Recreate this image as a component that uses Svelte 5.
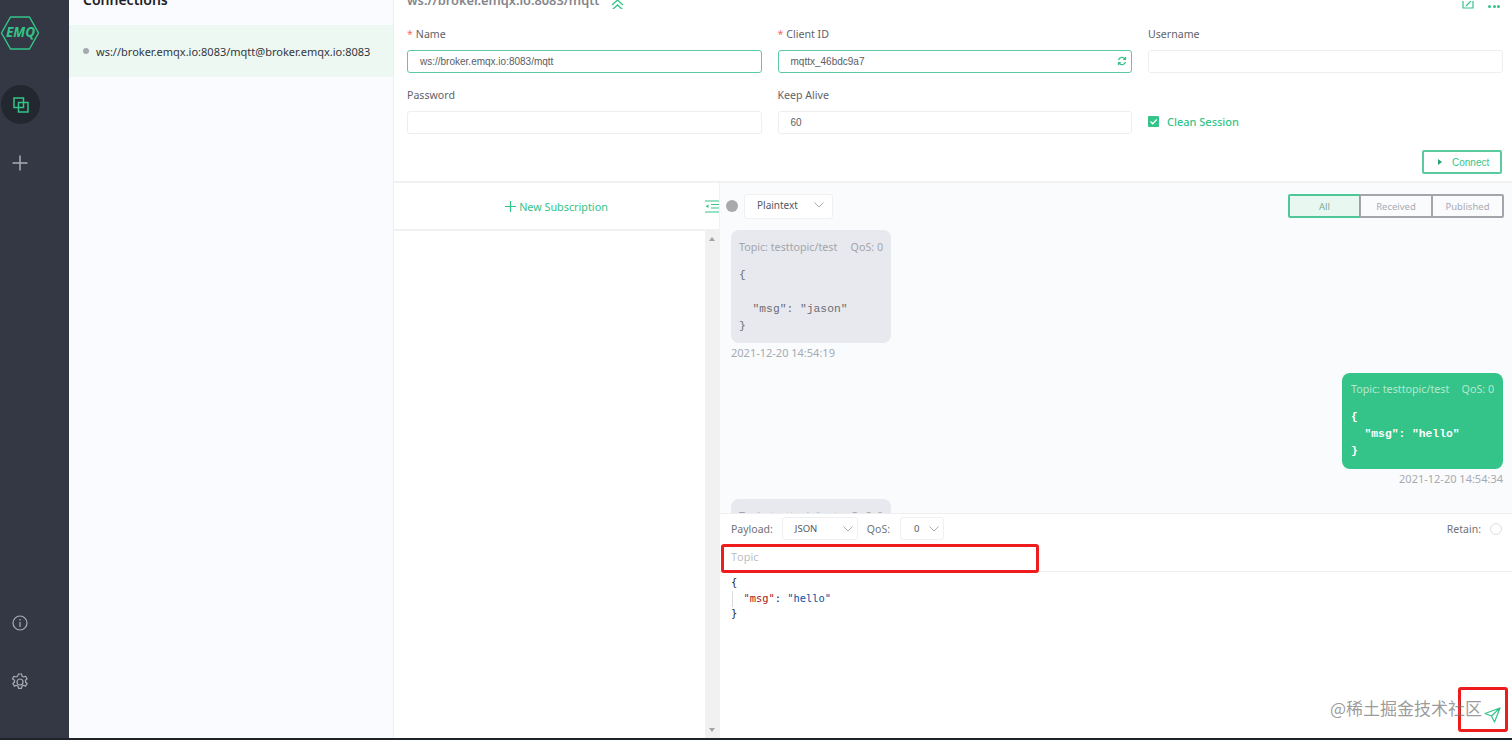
<script>
  const fields = [
    { label: 'Name', req: true, value: 'ws://broker.emqx.io:8083/mqtt', active: true },
    { label: 'Client ID', req: true, value: 'mqttx_46bdc9a7', active: true, refresh: true },
    { label: 'Username', value: '' },
    { label: 'Password', value: '' },
    { label: 'Keep Alive', value: '60' }
  ]
</script>

<div class="app">
  <aside class="sidebar">
    <div class="logo">
      <svg width="40" height="36" viewBox="0 0 40 36" fill="none">
        <path d="M10.5 2h19L38.5 18l-9 16h-19L1.500 18z" stroke="#34c388" stroke-width="1.500" stroke-linejoin="round" />
      </svg>
      <span>EMQ</span>
    </div>
    <div class="nav-active">
      <svg width="16" height="16" viewBox="0 0 16 16" fill="none" stroke="#34c388" stroke-width="1.500">
        <rect x="1" y="1" width="9.500" height="9.500" />
        <rect x="5.500" y="5.500" width="9.500" height="9.500" />
      </svg>
    </div>
    <div class="nav-plus">
      <svg width="16" height="16" viewBox="0 0 16 16" stroke="#a9acb4" stroke-width="1.500">
        <path d="M8 0.500v15M0.500 8h15" />
      </svg>
    </div>
    <div class="spacer"></div>
    <div class="nav-info">
      <svg width="16" height="16" viewBox="0 0 16 16" fill="none" stroke="#a9acb4" stroke-width="1.200">
        <circle cx="8" cy="8" r="7" />
        <path d="M8 7v5M8 4v1.500" />
      </svg>
    </div>
    <div class="nav-gear">
      <svg width="18" height="18" viewBox="0 0 18 18" fill="none" stroke="#a9acb4" stroke-width="1.200" stroke-linejoin="round">
        <path d="M7.500 1h3l.5 2.200 1.500.8 2.100-.8 1.500 2.600-1.600 1.500v1.700l1.600 1.500-1.500 2.600-2.100-.8-1.500.8-.5 2.200h-3l-.5-2.200-1.500-.8-2.100.8-1.500-2.600 1.600-1.500V7.300L1.400 5.800l1.500-2.600 2.100.8 1.500-.8z" />
        <circle cx="9" cy="9" r="3" />
      </svg>
    </div>
  </aside>

  <section class="connections">
    <h1>Connections</h1>
    <div class="conn-item">
      <i class="dot"></i>
      <span>ws://broker.emqx.io:8083/mqtt@broker.emqx.io:8083</span>
    </div>
  </section>

  <main class="main">
    <section class="config">
      <div class="titlebar">
        <h2>ws://broker.emqx.io:8083/mqtt</h2>
        <svg class="collapse" width="13" height="9" viewBox="0 0 13 9" fill="none" stroke="#34c388" stroke-width="1.300">
          <path d="M1 5l5.500-5 5.500 5M1 10l5.500-5 5.500 5" />
        </svg>
        <div class="spacer"></div>
        <svg width="12" height="8" viewBox="0 0 12 8" fill="none" stroke="#34c388" stroke-width="1.200">
          <path d="M1-4h10v11H1zM4 5l5-5" />
        </svg>
        <div class="more"><i></i><i></i><i></i></div>
      </div>
      <div class="form">
        {#each fields as f}
          <div class="field">
            <label>{#if f.req}<em>*</em>{/if}{f.label}</label>
            <div class="input" class:active={f.active}>
              {f.value}
              {#if f.refresh}
                <svg class="refresh" width="10" height="10" viewBox="0 0 10 10" fill="none" stroke="#34c388" stroke-width="1.300">
                  <path d="M1.500 4A3.600 3.600 0 0 1 8 3M8.500 6A3.600 3.600 0 0 1 2 7M8.500 1v2.300H6.200M1.500 9V6.700h2.300" />
                </svg>
              {/if}
            </div>
          </div>
        {/each}
        <div class="check-field">
          <span class="check">
            <svg width="11" height="11" viewBox="0 0 11 11" fill="none" stroke="#fff" stroke-width="1.300"><path d="M2.500 5.500l2.200 2.200 4-4.200" /></svg>
          </span>
          Clean Session
        </div>
      </div>
      <div class="connect-row">
        <button class="connect"><i class="play"></i>Connect</button>
      </div>
    </section>

    <div class="lower">
      <section class="subs">
        <div class="subs-head">
          <span class="new-sub">
            <svg width="11" height="11" viewBox="0 0 11 11" stroke="#34c388" stroke-width="1.200"><path d="M5.500 0v11M0 5.500h11" /></svg>
            New Subscription
          </span>
          <svg class="fold" width="14" height="13" viewBox="0 0 14 13" fill="none" stroke="#34c388" stroke-width="1.200">
            <path d="M0 1h14M6 4.500h8M6 8h8M0 12h14" />
            <path d="M3.500 4.500L.5 6.300l3 1.700z" fill="#34c388" stroke="none" />
          </svg>
        </div>
        <div class="subs-body">
          <div class="scrollbar">
            <i class="up"></i>
            <i class="down"></i>
          </div>
        </div>
      </section>

      <section class="chat">
        <div class="chat-head">
          <i class="status"></i>
          <div class="select plaintext">Plaintext
            <svg width="10" height="6" viewBox="0 0 10 6" fill="none" stroke="#a8abb2" stroke-width="1"><path d="M.5.500L5 5 9.500.500" /></svg>
          </div>
          <div class="spacer"></div>
          <div class="tabs">
            <span class="tab on">All</span>
            <span class="tab">Received</span>
            <span class="tab">Published</span>
          </div>
        </div>

        <div class="messages">
          <div class="msg left">
            <div class="bubble">
              <div class="meta"><span>Topic: testtopic/test</span><span>QoS: 0</span></div>
              <pre>{'{'}

  "msg": "jason"
{'}'}</pre>
            </div>
            <div class="time">2021-12-20 14:54:19</div>
          </div>
          <div class="msg right">
            <div class="bubble green">
              <div class="meta"><span>Topic: testtopic/test</span><span>QoS: 0</span></div>
              <pre>{'{'}
  "msg": "hello"
{'}'}</pre>
            </div>
            <div class="time">2021-12-20 14:54:34</div>
          </div>
          <div class="msg left">
            <div class="bubble">
              <div class="meta"><span>Topic: testtopic/test</span><span>QoS: 0</span></div>
            </div>
          </div>
        </div>

        <div class="publish">
          <div class="pub-opts">
            <span class="opt">Payload:</span>
            <div class="select json">JSON
              <svg width="10" height="6" viewBox="0 0 10 6" fill="none" stroke="#a8abb2" stroke-width="1"><path d="M.5.500L5 5 9.500.500" /></svg>
            </div>
            <span class="opt">QoS:</span>
            <div class="select qos">0
              <svg width="10" height="6" viewBox="0 0 10 6" fill="none" stroke="#a8abb2" stroke-width="1"><path d="M.5.500L5 5 9.500.500" /></svg>
            </div>
            <div class="spacer"></div>
            <span class="opt">Retain:</span>
            <i class="radio"></i>
          </div>
          <div class="topic">Topic</div>
          <div class="editor">
            <pre><span class="guide"></span>{'{'}
  <span class="key">"msg"</span>: <span class="str">"hello"</span>
{'}'}</pre>
          </div>
          <svg class="send" width="17" height="16" viewBox="0 0 17 16" fill="none" stroke="#34c388" stroke-width="1.200" stroke-linejoin="round">
            <path d="M16 1L1 6.500l6.500 2.500L10.500 15zM16 1L7.500 9" />
          </svg>
        </div>
      </section>
    </div>
  </main>

  <div class="mark mark-topic"></div>
  <div class="mark mark-send"></div>
  <div class="watermark">@稀土掘金技术社区</div>
</div>

<style>
  :global(body) {
    background: #1f2428;
    overflow: hidden;
  }

  .app {
    position: relative;
    display: flex;
    width: 1512px;
    height: 738px;
    overflow: hidden;
    background: #fff;
    font-family: "Noto Sans", "Open Sans", sans-serif;
    color: #44474f;
  }

  .spacer {
    flex: 1;
  }

  pre {
    margin: 0;
  }

  /* left rail */
  .sidebar {
    flex: 0 0 69px;
    display: flex;
    flex-direction: column;
    align-items: center;
    box-sizing: border-box;
    padding-bottom: 47px;
    background: #333844;
  }

  .logo {
    position: relative;
    width: 40px;
    height: 36px;
    margin: 15px 0 0 -29px;
    color: #34c388;
  }

  .logo span {
    position: absolute;
    left: 6px;
    top: 8px;
    font: italic 700 13.500px/18px "Noto Sans", sans-serif;
  }

  .nav-active {
    display: flex;
    align-items: center;
    justify-content: center;
    width: 39px;
    height: 39px;
    margin: 34px 0 0 -28px;
    border-radius: 50%;
    background: #23272f;
  }

  .nav-plus {
    display: flex;
    height: 16px;
    margin: 31px 0 0 -29px;
  }

  .nav-info {
    display: flex;
    height: 16px;
    margin: 0 0 42px -29px;
  }

  .nav-gear {
    display: flex;
    height: 18px;
    margin-left: -29px;
  }

  /* connection list */
  .connections {
    flex: 0 0 325px;
    box-sizing: border-box;
    min-width: 0;
    border-right: 1px solid #eceff1;
    background: #fafbfe;
  }

  .connections h1 {
    height: 25px;
    margin: -13px 0 0;
    padding-left: 14px;
    font-size: 14px;
    line-height: 25px;
    font-weight: 600;
    color: #1e2127;
  }

  .conn-item {
    display: flex;
    align-items: center;
    gap: 7px;
    height: 52px;
    margin-top: 13px;
    padding-left: 14px;
    background: #edf8f2;
    font-size: 11px;
    color: #33363d;
    white-space: nowrap;
  }

  .dot {
    width: 6px;
    height: 6px;
    border-radius: 50%;
    background: #a6a9b0;
  }

  .main {
    flex: 1;
    min-width: 0;
    display: flex;
    flex-direction: column;
  }

  /* connection form */
  .config {
    flex: 0 0 183px;
    box-sizing: border-box;
    padding: 0 10px 0 13px;
    border-bottom: 2px solid #eff1f3;
  }

  .titlebar {
    display: flex;
    align-items: flex-end;
    gap: 11px;
    height: 9px;
    padding-right: 2px;
  }

  .titlebar h2 {
    margin: 0;
    font-size: 12.800px;
    line-height: 18px;
    font-weight: 600;
    color: #83868d;
    white-space: nowrap;
  }

  .more {
    display: flex;
    gap: 1.500px;
    padding-left: 3px;
    margin-bottom: 1px;
  }

  .more i {
    width: 3px;
    height: 3px;
    background: #34c388;
    border-radius: 50%;
  }

  .form {
    display: grid;
    grid-template-columns: repeat(3, 354.500px);
    column-gap: 16px;
    row-gap: 13px;
    margin-top: 16px;
  }

  .field label {
    display: block;
    height: 17px;
    margin-bottom: 8px;
    font-size: 10.600px;
    line-height: 19px;
    color: #5f6269;
  }

  .field em {
    margin-right: 3px;
    font-style: normal;
    color: #f56c6c;
  }

  .input {
    position: relative;
    box-sizing: border-box;
    height: 23px;
    padding-left: 12px;
    border: 1px solid #eceef1;
    border-radius: 3px;
    font: 10px/21px "Liberation Sans", sans-serif;
    color: #5a5d64;
  }

  .input.active {
    border-color: #5cc9a0;
  }

  .refresh {
    position: absolute;
    right: 4px;
    top: 5px;
  }

  .check-field {
    display: flex;
    align-items: center;
    gap: 8px;
    margin-top: 24px;
    height: 23px;
    font-size: 11px;
    font-weight: 500;
    color: #34c388;
  }

  .check {
    display: flex;
    width: 11px;
    height: 11px;
    border-radius: 1px;
    background: #34c388;
  }

  .connect-row {
    display: flex;
    justify-content: flex-end;
    margin-top: 16px;
  }

  .connect {
    display: flex;
    align-items: center;
    gap: 10px;
    box-sizing: border-box;
    width: 80px;
    height: 24px;
    padding: 0 0 0 14px;
    border: 2px solid #5ccba0;
    border-radius: 2px;
    background: #fff;
    font: 10px "Liberation Sans", sans-serif;
    color: #34c388;
  }

  .play {
    width: 0;
    height: 0;
    border-left: 4px solid #2c9f70;
    border-top: 3px solid transparent;
    border-bottom: 3px solid transparent;
  }

  .lower {
    flex: 1;
    min-height: 0;
    display: flex;
  }

  /* subscriptions */
  .subs {
    flex: 0 0 325px;
    display: flex;
    flex-direction: column;
  }

  .subs-head {
    position: relative;
    display: flex;
    align-items: center;
    justify-content: center;
    flex: 0 0 48px;
    box-sizing: border-box;
    border-bottom: 2px solid #f0f1f3;
  }

  .new-sub {
    display: flex;
    align-items: center;
    gap: 3px;
    font-size: 10.800px;
    color: #34c388;
  }

  .fold {
    position: absolute;
    right: 0;
    top: 17px;
  }

  .subs-body {
    flex: 1;
    display: flex;
    justify-content: flex-end;
  }

  .scrollbar {
    position: relative;
    width: 14px;
    background: #f1f1f1;
  }

  .up, .down {
    position: absolute;
    left: 4px;
    width: 0;
    height: 0;
    border-left: 3px solid transparent;
    border-right: 3px solid transparent;
  }

  .up {
    top: 6px;
    border-bottom: 4px solid #a3a3a3;
  }

  .down {
    bottom: 6px;
    border-top: 4px solid #a3a3a3;
  }

  /* message pane */
  .chat {
    flex: 1;
    min-width: 0;
    display: flex;
    flex-direction: column;
    border-left: 1px solid #eff1f3;
    background: #fafbfd;
  }

  .chat-head {
    display: flex;
    align-items: center;
    flex: 0 0 46px;
    box-sizing: border-box;
    padding: 0 8px 0 6px;
  }

  .status {
    width: 12px;
    height: 12px;
    margin-right: 6px;
    border-radius: 50%;
    background: #a9a9ab;
  }

  .select {
    display: flex;
    align-items: center;
    justify-content: space-between;
    box-sizing: border-box;
    border: 1px solid #eef0f2;
    border-radius: 3px;
    background: #fff;
    font-size: 10.500px;
    color: #55585f;
  }

  .plaintext {
    width: 89px;
    height: 25px;
    padding: 0 8px 2px 12px;
    font-size: 10px;
  }

  .tabs {
    display: flex;
    height: 24px;
  }

  .tab {
    box-sizing: border-box;
    width: 72px;
    border: 2px solid #a3a5aa;
    border-left: 1px solid #a3a5aa;
    border-right-width: 1px;
    font-size: 9.500px;
    line-height: 21px;
    text-align: center;
    color: #a9acb2;
  }

  .tab:last-child {
    border-right-width: 2px;
    border-radius: 0 2px 2px 0;
  }

  .tab.on {
    border: 2px solid #4fc899;
    border-right-width: 1px;
    border-radius: 2px 0 0 2px;
    background: #e9f7f1;
    color: #7dab98;
  }

  .messages {
    flex: 1;
    min-height: 0;
    overflow: hidden;
    padding: 1px 8px 0 11px;
  }

  .msg {
    display: flex;
    flex-direction: column;
    margin-bottom: 12px;
  }

  .msg.right {
    align-items: flex-end;
    margin-right: 1px;
  }

  .bubble {
    box-sizing: border-box;
    width: 160px;
    padding: 9px 8px 8px;
    border-radius: 8px;
    background: #e8e9ee;
    color: #8d9097;
  }

  .bubble.green {
    width: 161px;
    padding: 8px 9px 9px;
    background: #34c388;
    color: #fff;
  }

  .meta {
    display: flex;
    justify-content: space-between;
    font-size: 10.700px;
    line-height: 17px;
    color: #a2a5ab;
  }

  .green .meta {
    color: #b5e9d0;
  }

  .bubble pre {
    margin-top: 11px;
    font: 11.300px/17px "Liberation Mono", monospace;
    color: #6b6e75;
  }

  .green pre {
    font-weight: 700;
    color: #fff;
  }

  .time {
    margin-top: 1px;
    font-size: 11px;
    line-height: 17px;
    color: #a7aab0;
  }

  /* publish box */
  .publish {
    position: relative;
    flex: 0 0 225px;
    box-sizing: border-box;
    border-top: 1px solid #eceef0;
    background: #fff;
  }

  .pub-opts {
    display: flex;
    align-items: center;
    height: 29px;
    padding: 0 10px 0 11px;
  }

  .opt {
    font-size: 10.500px;
    color: #70737a;
  }

  .json {
    width: 76px;
    height: 23px;
    margin: 0 9px;
    padding: 0 4px 0 12px;
    font-size: 9.500px;
  }

  .qos {
    width: 44px;
    height: 23px;
    margin-left: 10px;
    padding: 0 4px 0 13px;
    font-size: 9.500px;
  }

  .radio {
    width: 10px;
    height: 10px;
    margin-left: 9px;
    border: 1px solid #dfe1e5;
    border-radius: 50%;
  }

  .topic {
    box-sizing: border-box;
    height: 29px;
    padding: 0 11px;
    border-bottom: 1px solid #eceef0;
    font: 11px/28px "Open Sans", sans-serif;
    color: #b8bbc1;
  }

  .editor {
    padding: 3px 11px;
  }

  .editor pre {
    position: relative;
    font: 10.400px/15.500px "DejaVu Sans Mono", monospace;
    color: #24262b;
  }

  .guide {
    position: absolute;
    left: 1px;
    top: 16px;
    width: 1px;
    height: 16px;
    background: #d9d9d9;
  }

  .key {
    color: #a31515;
  }

  .str {
    color: #0451a5;
  }

  .send {
    position: absolute;
    right: 11px;
    bottom: 15px;
  }

  /* annotations painted over the screenshot */
  .mark {
    position: absolute;
    box-sizing: border-box;
    border: 3px solid #ee1c1c;
    border-radius: 3px;
  }

  .mark-topic {
    left: 721px;
    top: 544px;
    width: 318px;
    height: 29px;
  }

  .mark-send {
    left: 1458px;
    top: 687px;
    width: 50px;
    height: 45px;
  }

  .watermark {
    position: absolute;
    left: 1330px;
    top: 696px;
    font: 17px/24px "Noto Sans CJK SC", sans-serif;
    color: rgba(110, 110, 110, 0.7);
    white-space: nowrap;
  }
</style>
